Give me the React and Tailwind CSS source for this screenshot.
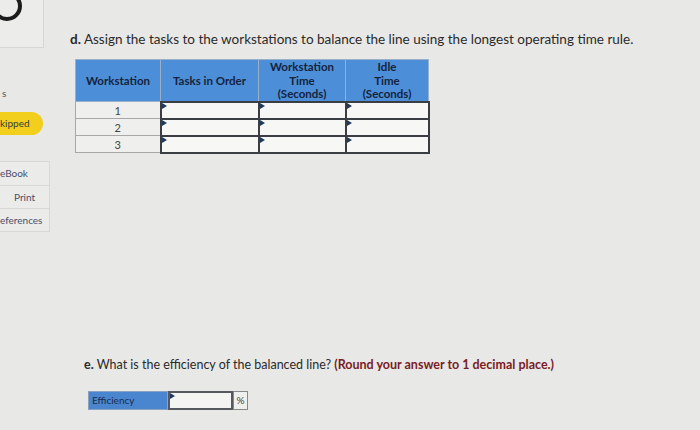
import React from "react";

const font = { fontFamily: "Lato, 'Open Sans', Arial, sans-serif" };

function Marker() {
  return (
    <span className="absolute left-0 top-0 w-0 h-0 border-t-[3px] border-b-[3px] border-l-[5px] border-t-transparent border-b-transparent border-l-[#1f3a5a]" />
  );
}

function InputCell() {
  return (
    <td className="relative p-0 border-2 border-[#3a3d42] bg-[#f7f7f5] h-[17px]">
      <Marker />
    </td>
  );
}

export default function App() {
  const rows = [1, 2, 3];
  return (
    <div className="w-[700px] h-[430px] overflow-hidden flex bg-[#e8e8e6] text-[#2b2b2b]" style={font}>
      {/* Sidebar */}
      <div className="w-[50px] shrink-0 flex flex-col">
        <div className="w-[44px] h-[48px] bg-[#ececea] border-r border-b border-[#d6d6d4] overflow-hidden">
          <div className="w-[30px] h-[30px] -ml-[8px] -mt-[9px] rounded-full border-[4px] border-[#1c1c1c]" />
        </div>
        <div className="text-[10px] text-[#555] mt-[40px] pl-[2px] leading-none">s</div>
        <div className="mt-[14px] -ml-[10px] w-[53px] h-[23px] rounded-full bg-[#f2cf1c] flex items-center pl-[10px] text-[10px] text-[#3a3a3a]">
          kipped
        </div>
        <div className="mt-[26px] flex flex-col w-[50px] text-[10px] text-[#4a4e6a]">
          <div className="h-[25px] flex items-center bg-[#ebebea] border border-[#d8d8d6] border-l-0">eBook</div>
          <div className="h-[23px] flex items-center justify-center bg-[#ebebea] border border-t-0 border-[#d8d8d6] border-l-0">Print</div>
          <div className="h-[23px] flex items-center bg-[#ebebea] border border-t-0 border-[#d8d8d6] border-l-0">eferences</div>
        </div>
      </div>

      {/* Main */}
      <div className="flex-1 pl-[20px] pt-[30px]">
        <p className="text-[13.5px] leading-[18px] text-[#2a2a2a]">
          <span className="font-bold">d.</span> Assign the tasks to the workstations to balance the line using the longest operating time rule.
        </p>

        <table className="mt-[11px] ml-[5px] border-collapse text-[11.5px]">
          <thead>
            <tr className="bg-[#4c8fd8] text-[#15233d] font-bold h-[38px]">
              <th className="w-[85px] border border-[#9ab0c8] font-bold">Workstation</th>
              <th className="w-[98px] border border-[#9ab0c8] font-bold">Tasks in Order</th>
              <th className="w-[87px] border border-[#9ab0c8] font-bold leading-[13.5px]">
                Workstation<br />Time<br />(Seconds)
              </th>
              <th className="w-[83px] border border-[#9ab0c8] font-bold leading-[13.5px]">
                Idle<br />Time<br />(Seconds)
              </th>
            </tr>
          </thead>
          <tbody>
            {rows.map((r) => (
              <tr key={r}>
                <td className="h-[17px] border border-[#a8a8a8] bg-[#efefed] text-center text-[11px] text-[#444] leading-none">{r}</td>
                <InputCell />
                <InputCell />
                <InputCell />
              </tr>
            ))}
          </tbody>
        </table>

        <p className="mt-[203px] ml-[14px] text-[12.5px] leading-[16px] text-[#2a2a2a]">
          <span className="font-bold">e.</span> What is the efficiency of the balanced line?{" "}
          <span className="font-bold text-[#7a1c24]">(Round your answer to 1 decimal place.)</span>
        </p>

        <div className="mt-[18px] ml-[18px] flex items-stretch h-[19px] text-[10px]">
          <div className="w-[80px] bg-[#4a86cf] text-[#1d2c4a] flex items-center pl-[3px] border border-[#8aa2c0]">Efficiency</div>
          <div className="relative w-[65px] bg-[#f4f4f2] border-2 border-[#55585c]">
            <Marker />
          </div>
          <div className="w-[15px] border border-[#888] flex items-center justify-center text-[#444] bg-[#efefed]">%</div>
        </div>
      </div>
    </div>
  );
}
